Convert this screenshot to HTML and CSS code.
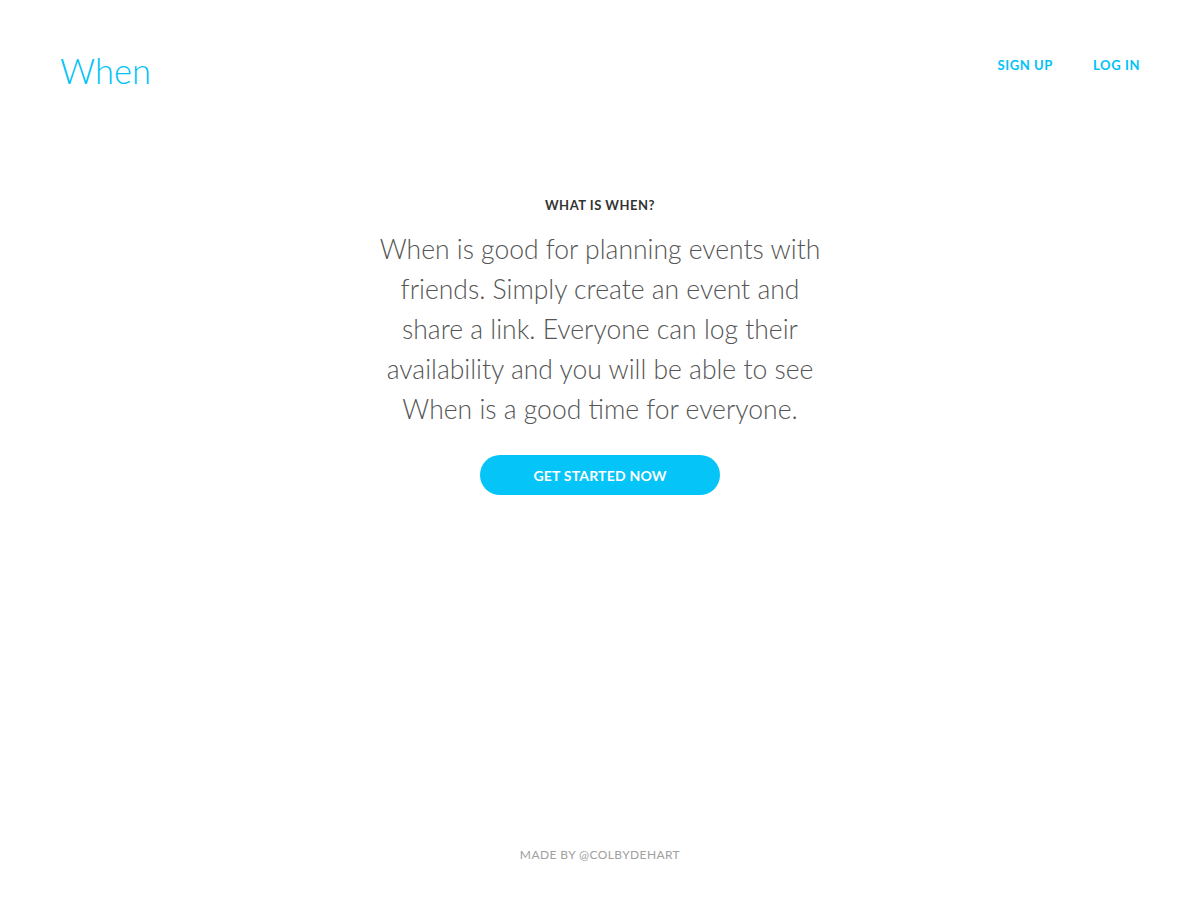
FILE: index.html
```html
<!DOCTYPE html>
<html>
<head>
<meta charset="utf-8">
<link rel="stylesheet" href="styles.css">
</head>
<body>
<div class="page">
  <header class="header">
    <div class="logo">When</div>
    <nav class="nav">
      <a class="nav-link" href="#">SIGN UP</a>
      <a class="nav-link" href="#">LOG IN</a>
    </nav>
  </header>
  <main class="main">
    <h2 class="eyebrow">WHAT IS WHEN?</h2>
    <p class="lead">When is good for planning events with friends. Simply create an event and share a link. Everyone can log their availability and you will be able to see When is a good time for everyone.</p>
    <a class="cta" href="#">GET STARTED NOW</a>
  </main>
  <footer class="footer">MADE BY @COLBYDEHART</footer>
</div>
</body>
</html>
```
FILE: styles.css
```css
html, body {
  margin: 0;
  padding: 0;
  background: #fff;
  font-family: Lato, "Open Sans", sans-serif;
}
.page {
  height: 900px;
  display: flex;
  flex-direction: column;
}
.header {
  display: flex;
  justify-content: space-between;
  align-items: flex-start;
  padding: 47px 60px 0 60px;
}
.logo {
  font-size: 34.5px;
  font-weight: 300;
  color: #00c3f7;
  line-height: 48px;
}
.nav {
  display: flex;
  gap: 40px;
  padding-top: 8px;
}
.nav-link {
  color: #00c3f7;
  text-decoration: none;
  font-size: 13px;
  font-weight: 700;
  letter-spacing: 0.6px;
  line-height: 20px;
}
.main {
  display: flex;
  flex-direction: column;
  align-items: center;
  padding-top: 101px;
  flex: 1;
}
.eyebrow {
  margin: 0;
  font-size: 13px;
  font-weight: 700;
  letter-spacing: 0.5px;
  color: #333;
  line-height: 18px;
}
.lead {
  margin: 15px 0 0 0;
  width: 460px;
  text-align: center;
  font-size: 26.5px;
  font-weight: 300;
  line-height: 40px;
  color: #555;
}
.cta {
  margin-top: 26px;
  width: 240px;
  height: 40px;
  border-radius: 20px;
  background: #05c4f7;
  color: #fff;
  text-decoration: none;
  font-size: 14px;
  font-weight: 700;
  letter-spacing: 0.2px;
  display: flex;
  align-items: center;
  justify-content: center;
}
.footer {
  text-align: center;
  font-size: 12px;
  color: #a0a0a0;
  letter-spacing: 0.4px;
  padding-bottom: 37px;
  line-height: 16px;
}
```
